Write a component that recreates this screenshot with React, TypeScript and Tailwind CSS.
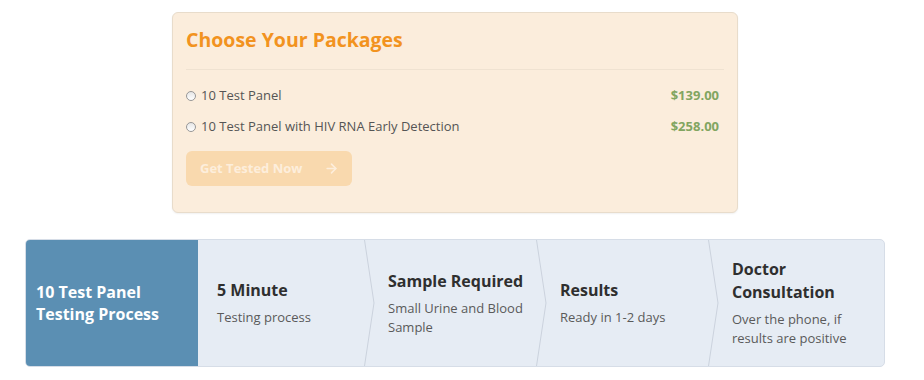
import { ArrowRight } from "lucide-react";

const packages = [
  { name: "10 Test Panel", price: "$139.00" },
  { name: "10 Test Panel with HIV RNA Early Detection", price: "$258.00" },
];

const steps = [
  { title: "5 Minute", text: "Testing process" },
  { title: "Sample Required", text: "Small Urine and Blood Sample" },
  { title: "Results", text: "Ready in 1-2 days" },
  { title: "Doctor Consultation", text: "Over the phone, if results are positive" },
];

const Chevron = () => (
  <svg
    className="absolute left-[-5px] top-0 h-full w-[11px]"
    viewBox="0 0 11 100"
    preserveAspectRatio="none"
  >
    <polyline
      points="0.5,0 10,50 0.5,100"
      fill="none"
      stroke="#cbd2dd"
      strokeWidth="1"
      vectorEffect="non-scaling-stroke"
    />
  </svg>
);

const App = () => {
  return (
    <div className="w-[924px] h-[380px] bg-white font-['Open_Sans',sans-serif] pt-[12px]">
      <div className="ml-[25px] w-[860px]">
        {/* packages card */}
        <div className="mx-[147px] rounded-[6px] border border-[#e8dccb] bg-[#fbeddc] px-[13px] pt-[13px] pb-[26px] shadow-[0_1px_2px_rgba(0,0,0,0.06)]">
          <h2 className="text-[19.5px] leading-[28px] font-bold text-[#f2931f]">
            Choose Your Packages
          </h2>
          <div className="mt-[15px] border-t border-[#efe2d1]" />
          <div className="mt-[16px] flex flex-col gap-[11px] pr-[5px]">
            {packages.map((p) => (
              <label key={p.name} className="flex items-center justify-between h-[20px]">
                <span className="flex items-center gap-[5px] text-[13px] text-[#555]">
                  <span className="inline-block w-[10px] h-[10px] rounded-full border border-[#979797] bg-gradient-to-b from-[#e6e6e6] to-white" />
                  {p.name}
                </span>
                <span className="text-[13px] font-bold text-[#82a561]">{p.price}</span>
              </label>
            ))}
          </div>
          <button className="mt-[14px] flex items-center justify-between w-[166px] h-[35px] rounded-[6px] bg-[#f9d9ae] pl-[14px] pr-[13px] text-[13px] font-bold text-[#fdeedc]">
            Get Tested Now
            <ArrowRight size={15} strokeWidth={2.5} />
          </button>
        </div>

        {/* process strip */}
        <div className="mt-[26px] grid h-[128px] grid-cols-[172px_171px_172px_172px_1fr] overflow-hidden rounded-[5px] border border-[#d6dde7] bg-[#e6ecf4]">
          <div className="flex items-center bg-[#5b8fb3] pl-[10px] pr-[12px]">
            <p className="text-[16px] leading-[22px] font-bold text-white">
              10 Test Panel Testing Process
            </p>
          </div>
          {steps.map((s, i) => (
            <div key={s.title} className="relative flex flex-col justify-center pl-[19px] pr-[8px]">
              {i > 0 && <Chevron />}
              <h3 className="text-[16px] leading-[23px] font-bold text-[#2f2f2f]">{s.title}</h3>
              <p className="mt-[6px] text-[13px] leading-[19px] text-[#5a5a5a]">{s.text}</p>
            </div>
          ))}
        </div>
      </div>
    </div>
  );
};

export default App;
